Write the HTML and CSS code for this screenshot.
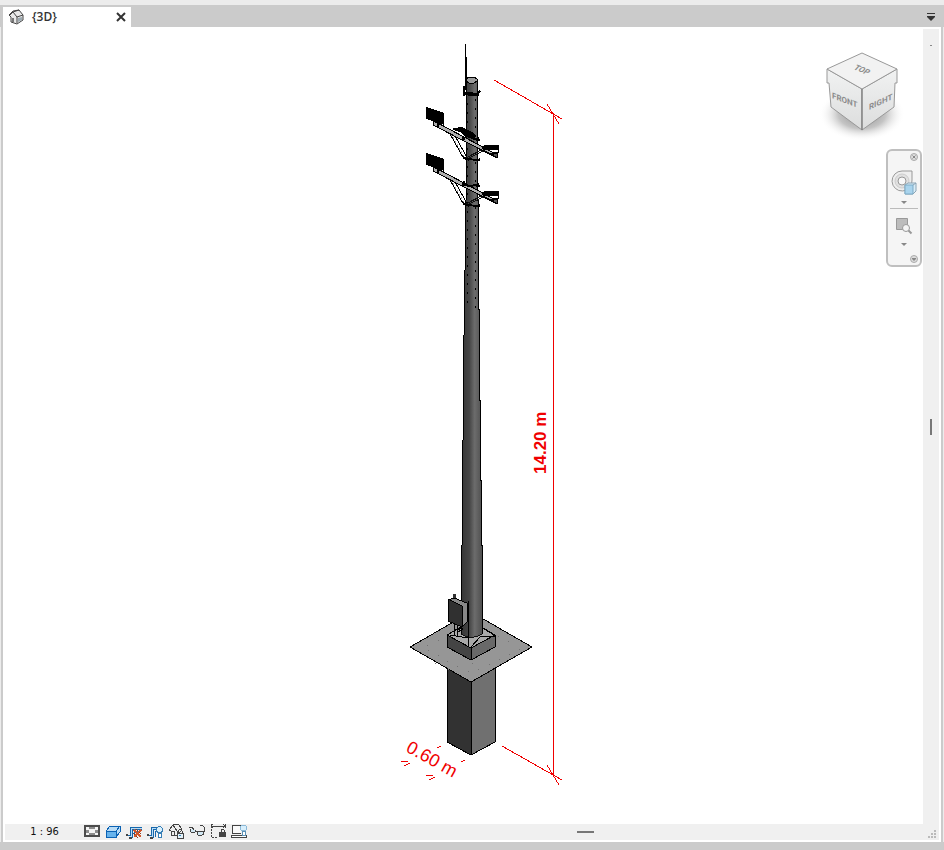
FILE: index.html
```html
<!DOCTYPE html>
<html lang="en">
<head>
<meta charset="utf-8">
<meta name="viewport" content="width=device-width, initial-scale=1">
<title>{3D}</title>
<link rel="stylesheet" href="styles.css">
</head>
<body>
<header class="tabs">
  <div class="tab">
    <svg class="tab-icon" viewBox="0 0 16 16" width="16" height="16" aria-hidden="true">
      <path d="M1 6 5 2l6-1 4 5v5l-6 4-6-2V8z" fill="#e8e8e8" stroke="#444"/>
      <path d="M1 7 5 3l4 5v6M9 8l6-2M5 3l6-2" fill="none" stroke="#444"/>
      <path d="M10 9l4-1v3l-4 2z" fill="#9caab2"/><path d="M4 9h2v4H4z" fill="#777"/>
    </svg>
    <span class="tab-name">{3D}</span>
    <button class="tab-close" aria-label="Close view">
      <svg viewBox="0 0 10 10" width="10" height="10"><path d="M1 1l8 8M9 1L1 9" stroke="#333" stroke-width="2"/></svg>
    </button>
  </div>
  <button class="tab-list" aria-label="List open views">
    <svg viewBox="0 0 10 8" width="10" height="8"><path d="M1 0h8v1H1zM1 3h8v1L5 8 1 4z" fill="#333"/></svg>
  </button>
</header>

<main class="view">
  <section class="canvas" aria-label="3D model">
    <svg class="model" viewBox="3 27 920 797" role="img" aria-label="Floodlight pole with foundation">
      <defs>
        <linearGradient id="steel" x1="0" x2="1" y1="0" y2="0">
          <stop offset="0" stop-color="#353535"/><stop offset=".4" stop-color="#464646"/>
          <stop offset=".65" stop-color="#6c6c6c"/><stop offset="1" stop-color="#505050"/>
        </linearGradient>
        <g id="arm">
          <path d="M450 134l14 25M454 134l15 27" stroke="#000" stroke-width="1" fill="none"/>
          <path d="M451 134l15 26" stroke="#aaa" stroke-dasharray="2 2" fill="none"/>
          <path d="M434 121l60 32 1 4-62-32z" fill="#b0b0b0" stroke="#000"/>
          <path d="M426 107l18 6v12l-18-6z" fill="#000"/>
          <path d="M433 120l5 3v5M438 122v6" stroke="#000" stroke-width="2" fill="none"/>
          <path d="M466 158l15-8M465 160l18-9" stroke="#111" stroke-width="1" fill="none"/>
          <path d="M484 145h15v4l-3 1h-13l-1-2z" fill="#000"/>
          <path d="M483 150l6 4 8-2v6l-6-4z" fill="#555" stroke="#000"/>
          <path d="M498 149v4l-9 2" stroke="#000" fill="none"/>
          <path d="M463 156l4 2 10 1 3-1v3l-14-1-3-1zM462 137h3v3h-3zM476 138l3-1v3h-3z" fill="#000"/>
          <path d="M473 139l7 1" stroke="#000" stroke-width="2"/>
        </g>
      </defs>
      <g shape-rendering="crispEdges" stroke-linejoin="round">
        <path d="M447 667l24 14 24-14v75l-24 13-24-13z" fill="#707070" stroke="#000"/>
        <path d="M447 667l24 14v74l-24-13z" fill="#323232" stroke="#000"/>
        <path d="M471 612l61 35-61 35-61-35z" fill="#969696" stroke="#000"/>
        <path d="M428 650h1m9 5h1m8 6h1m9 5h1m10 5h1m9-2h1m10-5h1m9-5h1m9-5h1m9-5h1M427 645h1m10-5h1m48-10h1m10 6h1m9 5h1m-74 22h1m12 6h1m23-6h1" stroke="#747474"/>
        <path d="M447 635l24-14 24 14-24 14z" fill="#a9a9a9" stroke="#000"/>
        <path d="M447 635l24 13v12l-24-13z" fill="#444" stroke="#000"/>
        <path d="M471 648l24-13v12l-24 13z" fill="#696969" stroke="#000"/>
        <path d="M450 635l18 3M471 647l9-10 15-1M478 625l16 10" stroke="#000" fill="none"/>
        <path d="M466 80V120H466V200H465V270H464V335H463V440H462V545H461V634Q471 641 482 634V545H481V480H480V309H478V200H477V80z" fill="url(#steel)"/>
        <path d="M466 80V200H465V270H464V335H463V440H462V545H461V634M477 80V200H478V309H479V400H480V480H481V545H482V634" fill="none" stroke="#000"/>
        <path d="M461 634Q471 641 482 634" fill="none" stroke="#111"/>
        <path d="M466 79l3-2h5l3 2v2l-3 2h-5l-3-2z" fill="#9b9b9b" stroke="#000"/>
        <path d="M467 103v205" stroke="#000" stroke-width="1" stroke-dasharray="2 7"/>
        <path d="M475 99v210" stroke="#000" stroke-width="1" stroke-dasharray="2 7"/>
        <path d="M465 44v46M466 57v37" stroke="#000"/>
        <path d="M464 86v9l4-2 9 1 3-3M464 92l5 3h10" fill="none" stroke="#000" stroke-width="2"/>
        <use href="#arm"/>
        <path d="M453 128l9-1 12 6 2 4-4 2-8-3-4-4-7-2z" fill="#000"/>
        <use href="#arm" y="46"/>
        <path d="M463 183l5 3 11-1M464 181v4" fill="none" stroke="#000" stroke-width="2"/>
        <path d="M454 595v41M457 600v36" stroke="#000"/>
        <path d="M453 594h3v7h-3z" fill="#333"/>
        <path d="M448 600l6-2 13 5v19l-5 5-14-6z" fill="#888" stroke="#000"/>
        <path d="M448 599l14 7v21l-14-6z" fill="#303030" stroke="#000"/>
        <path d="M468 601v45" stroke="#000"/>
        <path d="M457 630l5-2v2l-5 2" stroke="#000" fill="none"/>
      </g>
      <g class="dimension" shape-rendering="crispEdges">
        <path d="M494 80l68 39M553.500 113v662M547 104l12 20M502 746l60 34M547 765l12 20"/>
        <path d="M437 748l4-2M461 762l4-2M401 762l7-1M404 766l6-3M426 776l7-1M429 780l6-3"/>
      </g>
      <text class="dimension-text strong" transform="translate(546 474) rotate(-90)">14.20 m</text>
      <text class="dimension-text" transform="translate(405 751) rotate(29)">0.60 m</text>
    </svg>

    <div class="view-cube">
      <svg viewBox="820 46 86 96" width="86" height="96" role="img" aria-label="View cube">
        <defs>
          <radialGradient id="shade"><stop offset="0" stop-color="#8a8a8a"/><stop offset=".55" stop-color="#c4c4c4"/><stop offset="1" stop-color="#fff" stop-opacity="0"/></radialGradient>
          <linearGradient id="side" x1="0" x2="0" y1="0" y2="1"><stop offset="0" stop-color="#f1f2f2"/><stop offset="1" stop-color="#dcdddd"/></linearGradient>
        </defs>
        <ellipse cx="862" cy="114" rx="43" ry="27" fill="url(#shade)"/>
        <path d="M827 69l35 20v41l-31-23-2-24h-2z" fill="url(#side)" stroke="#999"/>
        <path d="M897 69l-35 20v41l32-23 1-24h2z" fill="url(#side)" stroke="#999"/>
        <path d="M862 53l35 16-35 20-35-20z" fill="#f2f2f2" stroke="#999"/>
        <path d="M862 89v41" stroke="#777"/>
        <text class="cube-label" transform="translate(832 98) skewY(21)">FRONT</text>
        <text class="cube-label" transform="translate(869 110) skewY(-25)">RIGHT</text>
        <text class="cube-label" transform="translate(853 69) rotate(22) skewX(-20)">TOP</text>
      </svg>
    </div>

    <nav class="nav-bar" aria-label="Navigation bar">
      <button class="nav-small" aria-label="Close"><svg viewBox="0 0 8 8" width="8" height="8"><circle cx="4" cy="4" r="3.500" fill="#ddd" stroke="#aaa"/><path d="M2.500 2.500l3 3m0-3l-3 3" stroke="#888"/></svg></button>
      <button class="nav-tool wheel" aria-label="Steering wheel">
        <svg viewBox="0 0 26 26" width="26" height="26"><path d="M11 2h10v9a10 10 0 1 1-10-9z" fill="#eee" stroke="#999"/><circle cx="11" cy="12" r="7" fill="#e0e0e0" stroke="#ccc"/><circle cx="11" cy="12" r="4" fill="#f8f8f8" stroke="#999"/><path d="M14 16l3-2h8v8l-3 3h-8z" fill="#d9edf8" stroke="#8ca5b5"/><path d="M14 16h8v9h-8z" fill="#a9d4ed" stroke="#7cabc6"/><path d="M22 16l3-2" stroke="#8ca5b5"/></svg>
        <svg viewBox="0 0 6 4" width="6" height="4"><path d="M0 0h6L3 3z" fill="#888"/></svg>
      </button>
      <button class="nav-tool" aria-label="Zoom region">
        <svg viewBox="0 0 18 18" width="18" height="18"><path d="M1.500 1.500h11v11h-11z" fill="#bcbcbc" stroke="#999"/><circle cx="11" cy="11" r="3.500" fill="#f4f4f4" stroke="#999"/><path d="M13.500 13.500l3 3" stroke="#999" stroke-width="2"/></svg>
        <svg viewBox="0 0 6 4" width="6" height="4"><path d="M0 0h6L3 3z" fill="#888"/></svg>
      </button>
      <button class="nav-small" aria-label="Customize"><svg viewBox="0 0 8 8" width="8" height="8"><circle cx="4" cy="4" r="3.500" fill="#ddd" stroke="#aaa"/><path d="M2 3h4v1L4 6 2 4z" fill="#888"/></svg></button>
    </nav>
  </section>

  <aside class="gutter"><span class="mark"></span><span class="grip-v"></span></aside>

  <footer class="controls">
    <button class="scale">1 : 96</button>
    <div class="tools">
      <button aria-label="Detail level"><svg viewBox="0 0 16 16"><path d="M0 2h16v12H0z" fill="#4c4c4c"/><path d="M2 4h12v8H2z" fill="#8c8c8c"/><path d="M2 4h3v3H2zM11 4h3v3h-3zM2 10h3v2H2zM11 10h3v2h-3zM5 6h6v4H5z" fill="#f4f4f4"/></svg></button>
      <button aria-label="Visual style"><svg viewBox="0 0 16 16"><path d="M1 8l4-5h10v6l-4 5H1z" fill="#b9dcf6" stroke="#0b62b4"/><path d="M1 8h10v6H1z" fill="#67b3ec" stroke="#0b62b4"/><path d="M11 8l4-5" stroke="#0b62b4"/></svg></button>
      <button aria-label="Crop view"><svg viewBox="0 0 16 16"><path d="M2 12h2V4h12v2H6v8H4" fill="#b9dcf6" stroke="#1768ac"/><path d="M8 14V8h7" fill="none" stroke="#1768ac"/><path d="M0 11h2v2H0zM3 14h3v2H3z" fill="#444"/><path d="M8 7l7 7M15 7l-7 7" stroke="#d0562a" stroke-width="2"/><path d="M10 6l5 5M7 10l5 5" stroke="#8b3a20" stroke-dasharray="1 1"/></svg></button>
      <button aria-label="Show crop region"><svg viewBox="0 0 16 16"><path d="M2 12h2V4h8v2H6v8H4" fill="#b9dcf6" stroke="#1768ac"/><path d="M8 14V8h2" fill="none" stroke="#1768ac"/><path d="M0 11h2v2H0zM3 14h3v2H3z" fill="#444"/><circle cx="12.500" cy="6.500" r="3" fill="#d8effc" stroke="#367eb6"/><path d="M11 10h3v4h-3z" fill="#fff" stroke="#367eb6"/></svg></button>
      <button aria-label="Lock 3D view"><svg viewBox="0 0 16 16"><path d="M1 7l4-5 5-1 4 5-1 2-5 5-5-1V8z" fill="#eee" stroke="#444"/><path d="M1 7l4-5 4 6v5M10 1L5 2M4 8h2v4" fill="none" stroke="#444"/><path d="M9 10h6v5H9z" fill="#e4f0f7" stroke="#444"/><path d="M10 10V8q2-3 4 0v2" fill="none" stroke="#444"/><path d="M11 12h2v1h-2z" fill="#3186bc"/></svg></button>
      <button aria-label="Temporary hide or isolate"><svg viewBox="0 0 16 16"><path d="M0 5l3-1 3 4q2 1 3 0M15 9l1-4-3-3-2 1" fill="none" stroke="#444"/><path d="M1 6q0 4 3 4 3-1 2-3M8 9q0 4 3 4 4-1 4-4l-4-1z" fill="#d3e8f4" stroke="#444"/></svg></button>
      <button aria-label="Reveal constraints"><svg viewBox="0 0 16 16"><path d="M1 1v4M15 1v4M1 3h14M3 1L1 3l2 2M13 1l2 2-2 2" fill="none" stroke="#444"/><path d="M1 6v8h7" stroke="#444" stroke-dasharray="2 1" fill="none"/><path d="M9 9h7v5H9z" fill="#444"/><path d="M11 9V7q2-2 3 0v2" stroke="#444" fill="none"/></svg></button>
      <button aria-label="Analytical model"><svg viewBox="0 0 16 16"><path d="M10 2H1v8h9" fill="#fafafa" stroke="#444"/><path d="M0 12h15v2H0z" fill="#fff" stroke="#444"/><circle cx="12.500" cy="5" r="3" fill="#d8effc" stroke="#8bb9d8"/><path d="M11 8h3v4h-3z" fill="#fff" stroke="#5a90b5"/></svg></button>
    </div>
    <span class="grip-h"></span>
    <svg class="resize" viewBox="0 0 8 8" width="8" height="8" aria-hidden="true"><path d="M6 0h2v2H6zM3 3h2v2H3zM6 3h2v2H6zM0 6h2v2H0zM3 6h2v2H3zM6 6h2v2H6z" fill="#bbb"/></svg>
  </footer>
</main>
<div class="base"></div>
</body>
</html>
```
FILE: styles.css
```css
* { box-sizing: border-box; }

body {
  margin: 0;
  min-height: 100vh;
  display: flex;
  flex-direction: column;
  background: #ececec;
  color: #333;
  font: 12px/16px "Open Sans", sans-serif;
}

button {
  display: flex;
  align-items: center;
  justify-content: center;
  padding: 0;
  border: 0;
  background: none;
  color: inherit;
  font: inherit;
}

svg { display: block; }

.tabs {
  display: flex;
  justify-content: space-between;
  align-items: flex-end;
  height: 22px;
  margin-top: 5px;
  padding: 0 8px 0 3px;
  background: #cbcbcb;
}

.tab-list { height: 20px; }

.tab {
  display: flex;
  align-items: center;
  gap: 8px;
  width: 128px;
  height: 20px;
  padding: 0 5px;
  background: #fff;
}

.tab-name { flex: 1; font-weight: 600; }

.view {
  flex: 1;
  display: grid;
  grid-template-columns: 1fr 16px;
  grid-template-rows: 1fr 16px;
  margin: 0 1px;
  padding: 0 2px 2px 0;
  border: solid #cbcbcb;
  border-width: 0 2px;
  background: #fff;
}

.canvas {
  position: relative;
  min-width: 0;
  min-height: 0;
}

.model {
  width: 100%;
  height: 100%;
}

.dimension { fill: none; stroke: #f00000; stroke-width: 1px; }

.dimension-text {
  fill: #f00000;
  font: 18px "Liberation Sans", sans-serif;
}

.dimension-text.strong { font-size: 17px; font-weight: 700; }

.view-cube {
  position: absolute;
  top: 19px;
  right: 17px;
}

.cube-label {
  fill: #8c8c8c;
  font: bold 8px "Roboto", sans-serif;
}

.nav-bar {
  position: absolute;
  top: 122px;
  right: 1px;
  display: flex;
  flex-direction: column;
  width: 36px;
  padding: 2px;
  border: 2px solid #bfbfbf;
  border-radius: 6px;
  background: #f5f5f5;
}

.nav-small { align-self: flex-end; height: 8px; }

.nav-tool {
  flex-direction: column;
  gap: 8px;
  height: 46px;
}

.nav-tool.wheel {
  gap: 6px;
  height: 48px;
  padding-top: 4px;
  border-bottom: 1px solid #bbb;
}

.gutter {
  display: grid;
  grid-template-rows: 1fr auto 1fr;
  justify-items: center;
  margin-top: 2px;
  background: #f0f0f0;
}

.mark { width: 2px; height: 1px; margin-top: 16px; background: #888; }
.grip-v { width: 2px; height: 16px; background: #777; }

.controls {
  grid-column: 1 / -1;
  display: grid;
  grid-template-columns: 79px auto 1fr 13px;
  align-items: center;
  margin-left: 2px;
  padding-right: 3px;
  background: #f0f0f0;
}

.scale {
  color: #111;
  font: 11px/16px "DejaVu Sans Condensed", "DejaVu Sans", sans-serif;
}

.tools { display: flex; gap: 5px; }

.tools svg {
  width: 16px;
  height: 16px;
  margin-top: -2px;
  shape-rendering: crispEdges;
}

.grip-h {
  justify-self: center;
  width: 17px;
  height: 2px;
  background: #777;
}

.resize { justify-self: end; align-self: end; margin-bottom: 2px; }

.base { height: 8px; background: #cbcbcb; }
```
